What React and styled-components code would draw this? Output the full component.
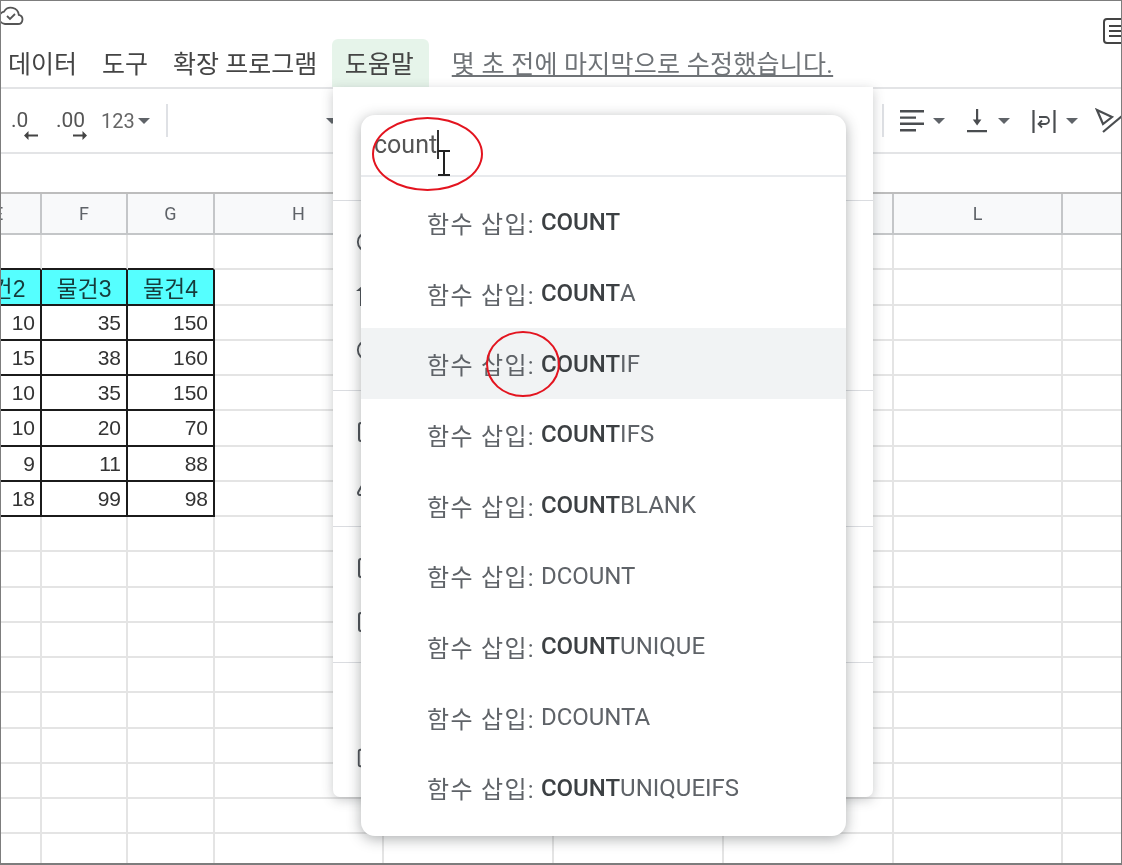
import styled, {createGlobalStyle} from "styled-components";
import {Circle, Square, Triangle} from "lucide-react";

const KR = `Roboto, "Noto Sans CJK KR", sans-serif`

const GlobalStyle = createGlobalStyle`
	html, body {
		margin: 0;
		background: #fff;
	}
	* {
		box-sizing: border-box;
	}
`

const Frame = styled.div`
	position: relative;
	width: 1122px;
	height: 865px;
	overflow: hidden;
	background: #fff;
	border: 1px solid #7d7d7d;
	border-bottom-width: 2px;
	font-family: ${KR};
	filter: blur(0.45px);
`

const TitleBar = styled.div`
	display: flex;
	justify-content: space-between;
	height: 38px;
	padding-top: 3px;
	margin: 0 -10px 0 -3px;
`

const MenuRow = styled.div`
	display: flex;
	align-items: center;
	height: 48px;
	margin-left: -5.5px;
	color: #444;
	font-size: 25px;
`

const MenuItem = styled.div`
	display: flex;
	align-items: center;
	height: 48px;
	margin-left: ${p => p.$active ? 2 : 0}px;
	padding: 0 ${p => p.$active ? "15px 3px 13px" : "12.5px 3px"};
	border-radius: 6px 6px 0 0;
	background: ${p => p.$active ? "#e6f4ea" : "transparent"};
	white-space: nowrap;
`

const LastEdit = styled.div`
	margin-left: 23px;
	padding-bottom: 3px;
	color: #6f7377;
	letter-spacing: 0.25px;
	text-decoration: underline;
	white-space: nowrap;
`

const Toolbar = styled.div`
	display: flex;
	align-items: center;
	height: 67px;
	padding-left: 10px;
	border-top: 2px solid #e3e4e6;
	border-bottom: 2px solid #e3e4e6;
	color: #555;
	> * {
		flex: none;
	}
`

const Decimal = styled.div`
	display: flex;
	flex-direction: column;
	width: ${p => p.$w}px;
	margin-right: ${p => p.$gap}px;
	margin-top: 8px;
	font-size: 21px;
	line-height: 20px;
	svg {
		display: block;
		align-self: flex-end;
		margin-top: 1px;
	}
`

const NumberFormat = styled.div`
	font-size: 20px;
	color: #666;
`

const Caret = styled.span`
	display: inline-block;
	flex: none;
	width: 0;
	height: 0;
	margin-left: ${p => p.$left ?? 4}px;
	margin-right: ${p => p.$right ?? 0}px;
	border-left: 6px solid transparent;
	border-right: 6px solid transparent;
	border-top: 6px solid #5f6368;
`

const Separator = styled.div`
	width: 2px;
	height: 33px;
	margin-left: ${p => p.$left}px;
	background: #dfe1e5;
`

const RightTools = styled.div`
	display: flex;
	align-items: center;
	margin-left: 16px;
	svg {
		flex: none;
	}
`

const FormulaBar = styled.div`
	height: 40px;
	border-bottom: 2px solid #bdbdbd;
`

const Sheet = styled.div`
	display: grid;
	grid-template-columns: 86px 86px 87px 169px 170px 170px 170px 169px 170px;
	grid-template-rows: 41px;
	grid-auto-rows: 35.25px;
	margin-left: -45px;
	width: 1300px;
`

const ColumnHead = styled.div`
	display: flex;
	align-items: center;
	justify-content: center;
	background: #f8f9fa;
	border-right: 2px solid #c4c6c8;
	border-bottom: 2px solid #c4c6c8;
	color: #5f6368;
	font-size: 18px;
`

const HeadRow = styled.div`
	display: contents;
`

const Cell = styled.div`
	display: flex;
	align-items: center;
	justify-content: ${p => p.$head ? "center" : "flex-end"};
	padding: 1px ${p => p.$head ? 0 : 5}px 0 0;
	background: ${p => p.$head ? "#55ffff" : "#fff"};
	border-right: 2px solid ${p => p.$table ? "#1b1b1b" : "#e4e4e4"};
	border-bottom: 2px solid ${p => p.$table || p.$top ? "#1b1b1b" : "#e4e4e4"};
	color: ${p => p.$head ? "#163c3c" : "#333"};
	font-family: "Liberation Sans", "Noto Sans CJK KR", sans-serif;
	font-size: ${p => p.$head ? 23 : 21}px;
`

const MenuPanel = styled.div`
	position: absolute;
	left: 332px;
	top: 86px;
	width: 540px;
	height: 710px;
	background: #fff;
	border-radius: 0 0 7px 7px;
	box-shadow: 0 3px 12px rgba(60, 64, 67, 0.28);
`

const Section = styled.div`
	height: ${p => p.$h}px;
	padding: 14px 0 0 23px;
	border-bottom: ${p => p.$last ? "0" : "1.5px solid #dadce0"};
`

const Row = styled.div`
	display: flex;
	align-items: center;
	height: 54px;
	color: #50545a;
`

const Dialog = styled.div`
	position: absolute;
	left: 360px;
	top: 114px;
	width: 485px;
	height: 721px;
	background: #fff;
	border-radius: 14px;
	box-shadow: 0 3px 14px rgba(40, 44, 47, 0.38);
	overflow: hidden;
`

const SearchBox = styled.div`
	display: flex;
	align-items: center;
	height: 62px;
	padding: 0 0 1px 13px;
	border-bottom: 2px solid #e8eaed;
	color: #555;
	font-size: 25px;
`

const TextCaret = styled.span`
	display: inline-block;
	width: 2px;
	height: 29px;
	background: #333;
`

const List = styled.div`
	padding-top: 10px;
`

const Suggestion = styled.div`
	display: flex;
	align-items: center;
	height: 70.7px;
	padding-left: 66px;
	background: ${p => p.$hover ? "#f1f3f4" : "transparent"};
	color: #5f6368;
	font-size: 24px;
	white-space: nowrap;
`

const Prefix = styled.span`
	margin-right: 6px;
	letter-spacing: 1.3px;
`

const Match = styled.b`
	color: #3c4043;
	font-weight: 500;
`

const Mark = styled.div`
	position: absolute;
	left: ${p => p.$x}px;
	top: ${p => p.$y}px;
	width: ${p => p.$w}px;
	height: ${p => p.$h}px;
	border: 2.5px solid #e3141f;
	border-radius: 50%;
`

const Beam = styled.svg`
	position: absolute;
	left: 434px;
	top: 148px;
`

const columns = ["E", "F", "G", "H", "I", "J", "K", "L", "M"]

const tableRows = [
	["물건2", "물건3", "물건4"],
	["10", "35", "150"],
	["15", "38", "160"],
	["10", "35", "150"],
	["10", "20", "70"],
	["9", "11", "88"],
	["18", "99", "98"],
]

const suggestions = [
	["COUNT", ""],
	["COUNT", "A"],
	["COUNT", "IF"],
	["COUNT", "IFS"],
	["COUNT", "BLANK"],
	["", "DCOUNT"],
	["COUNT", "UNIQUE"],
	["", "DCOUNTA"],
	["COUNT", "UNIQUEIFS"],
]

const CloudIcon = () => (
	<svg width="26" height="22" viewBox="0 0 26 22" fill="none" stroke="#555" strokeWidth="1.8">
		<path d="M7 20h13a4.6 4.6 0 0 0 .8-9.1A8 8 0 0 0 6 7.6 6.3 6.3 0 0 0 7 20z"/>
		<path d="M9 12l3 3 5-5"/>
	</svg>
)

const NotesIcon = () => (
	<svg width="28" height="28" viewBox="0 0 28 28" fill="none" stroke="#444" strokeWidth="2" style={{marginTop: 13}}>
		<rect x="1" y="2" width="25" height="24" rx="3"/>
		<path d="M6 9h16M6 14h16M6 19h16"/>
	</svg>
)

const ArrowLeft = () => (
	<svg width="14" height="9" viewBox="0 0 14 9" fill="#444"><path d="M4.5 0v3.5H14v2H4.5V9L0 4.5z"/></svg>
)

const ArrowRight = () => (
	<svg width="14" height="9" viewBox="0 0 14 9" fill="#444"><path d="M9.5 0v3.5H0v2h9.5V9L14 4.5z"/></svg>
)

const AlignIcon = () => (
	<svg width="24" height="24" viewBox="0 0 24 24" fill="#4a4d50">
		<path d="M0 1h24v2.4H0zM0 7.4h16v2.4H0zM0 13.6h24V16H0zM0 20h16v2.4H0z"/>
	</svg>
)

const ValignIcon = () => (
	<svg width="20" height="24" viewBox="0 0 20 24" fill="#4a4d50">
		<path d="M0 21h20v2.2H0zM9 0h2.2v10.5l3.2 0-4.3 6-4.3-6 3.2 0z"/>
	</svg>
)

const WrapIcon = () => (
	<svg width="24" height="24" viewBox="0 0 24 24" fill="none" stroke="#4a4d50" strokeWidth="2.2">
		<path d="M1.5 1v23M22.5 1v23"/>
		<path d="M7 8h6.5a3 3 0 0 1 0 7H8" strokeWidth="1.8"/>
		<path d="M10 11.5l-3.5 3.5 3.5 3.5" strokeWidth="1.8"/>
	</svg>
)

const RotateIcon = () => (
	<svg width="28" height="26" viewBox="0 0 28 26" fill="none" stroke="#4a4d50" strokeWidth="2.2">
		<path d="M2 2l15 7-9 7z"/>
		<path d="M8 24L27 8"/>
	</svg>
)

const StemIcon = () => (
	<svg width="22" height="22" viewBox="0 0 22 22" fill="#50545a">
		<path d="M0 6l6-5v20H4V6z"/>
	</svg>
)

const App = () => {
	return (
		<Frame>
			<GlobalStyle/>
			<TitleBar>
				<CloudIcon/>
				<NotesIcon/>
			</TitleBar>
			<MenuRow>
				<MenuItem>데이터</MenuItem>
				<MenuItem>도구</MenuItem>
				<MenuItem>확장 프로그램</MenuItem>
				<MenuItem $active>도움말</MenuItem>
				<LastEdit>몇 초 전에 마지막으로 수정했습니다.</LastEdit>
			</MenuRow>
			<Toolbar>
				<Decimal $w={27} $gap={18}>.0<ArrowLeft/></Decimal>
				<Decimal $w={31} $gap={14}>.00<ArrowRight/></Decimal>
				<NumberFormat>123</NumberFormat>
				<Caret $left={3}/>
				<Separator $left={16}/>
				<Caret $left={158}/>
				<Separator $left={544}/>
				<RightTools>
					<AlignIcon/><Caret $left={9} $right={22}/>
					<ValignIcon/><Caret $left={11} $right={22}/>
					<WrapIcon/><Caret $left={10} $right={17}/>
					<RotateIcon/>
				</RightTools>
			</Toolbar>
			<FormulaBar/>
			<Sheet>
				<HeadRow>
					{columns.map(c => <ColumnHead key={c}>{c}</ColumnHead>)}
				</HeadRow>
				{Array.from({length: 18}).map((_, r) => (
					columns.map((c, i) => {
						const row = tableRows[r - 1]
						const inTable = row && i < 3
						return (
							<Cell key={c + r}
							      $table={inTable}
							      $top={r === 0 && i < 3}
							      $head={r === 1 && i < 3}>
								{inTable ? row[i] : ""}
							</Cell>
						)
					})
				))}
			</Sheet>
			<MenuPanel>
				<Section $h={114}/>
				<Section $h={190}>
					<Row><Circle size={22}/></Row>
					<Row><StemIcon/></Row>
					<Row><Circle size={22}/></Row>
				</Section>
				<Section $h={136}>
					<Row><Square size={24}/></Row>
					<Row><Triangle size={24}/></Row>
				</Section>
				<Section $h={136}>
					<Row><Square size={24}/></Row>
					<Row><Square size={24}/></Row>
				</Section>
				<Section $h={134} $last>
					<Row/>
					<Row><Square size={22}/></Row>
				</Section>
			</MenuPanel>
			<Dialog>
				<SearchBox>count<TextCaret/></SearchBox>
				<List>
					{suggestions.map(([bold, rest], i) => (
						<Suggestion key={i} $hover={i === 2}>
							<Prefix>함수 삽입:</Prefix>
							{bold && <Match>{bold}</Match>}{rest}
						</Suggestion>
					))}
				</List>
			</Dialog>
			<Beam width="18" height="28" viewBox="0 0 18 28" fill="none" stroke="#222" strokeWidth="2">
				<path d="M3 2h12M9 2v24M3 26h12"/>
			</Beam>
			<Mark $x={371} $y={116} $w={111} $h={74}/>
			<Mark $x={485} $y={330} $w={74} $h={66}/>
		</Frame>
	)
}

export default App
